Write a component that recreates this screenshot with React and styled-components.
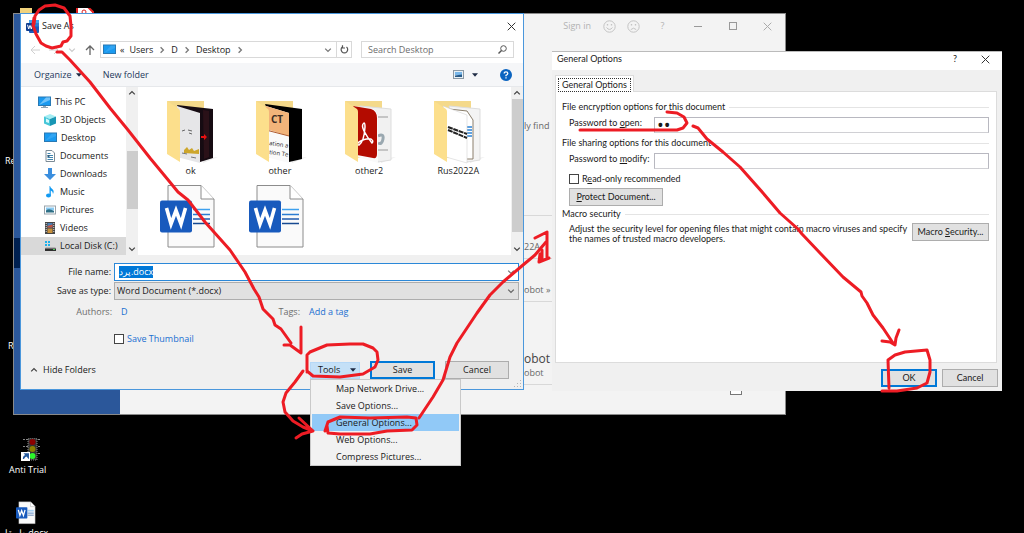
import { useEffect, useRef } from "react";
import styled, { createGlobalStyle } from "styled-components";

const GlobalStyle = createGlobalStyle`
*{
  box-sizing:border-box;
}
body{
  margin:0;
  background:#000;
  font-family:"Open Sans","Noto Sans",sans-serif;
  font-size:9px;
  line-height:12px;
  color:#1a1a1a;
}
button,input,select{
  font:inherit;
  color:inherit;
  margin:0;
}
svg{
  display:block;
  flex:none;
}
`;

const Desktop = styled.div`
position:relative;
min-height:100vh;
overflow:hidden;
`;

const Shortcut = styled.a`
position:absolute;
left:${props=>props.$x}px;
top:${props=>props.$y}px;
display:flex;
flex-direction:column;
align-items:center;
gap:2px;
color:#fff;
white-space:nowrap;
text-decoration:none;
`;

const WordWindow = styled.div`
position:absolute;
left:13px;
right:238px;
top:13px;
display:flex;
border:1px solid #8a8a8a;
background:#f3f3f3;
color:#666;
`;

const Rail = styled.div`
width:106px;
padding-top:224px;
background:#2b579a;
`;

const RailItem = styled.div`
height:30px;
background:#002050;
`;

const Backstage = styled.div`
flex:1;
`;

const WordHeader = styled.header`
display:flex;
justify-content:flex-end;
align-items:center;
height:24px;
color:#b2b2b2;
`;

const WordAction = styled.button`
display:flex;
justify-content:center;
align-items:center;
width:${props=>props.$width}px;
height:24px;
padding:0;
border:none;
background:none;
`;

const SignIn = styled.a`
margin-right:6px;
color:inherit;
text-decoration:none;
`;

const RecentList = styled.div`
margin-left:calc(50vw - 108px);
`;

const RecentRow = styled.div`
display:flex;
flex-direction:column;
justify-content:${props=>props.$middle ? "center" : "flex-end"};
height:${props=>props.$height}px;
padding-bottom:${props=>props.$middle ? "2px" : "5px"};
border-bottom:1px solid #d8d8d8;
white-space:pre;
`;

const RecentTitle = styled.span`
font-size:12px;
line-height:16px;
color:#444;
`;

const WordFooter = styled.div`
display:flex;
justify-content:flex-end;
height:29px;
padding-right:43px;
`;

const FooterBox = styled.div`
width:12px;
height:10px;
border:1px solid #777;
background:#fff;
`;

const SaveDialog = styled.section`
position:absolute;
left:20px;
top:13px;
width:calc(50vw - 8px);
border:1px solid #4a97dc;
background:#fff;
`;

const TitleBar = styled.header`
display:flex;
align-items:center;
height:24px;
padding:0 7px 0 5px;
gap:3px;
`;

const Title = styled.h1`
flex:1;
margin:0;
font-size:9px;
font-weight:400;
`;

const IconButton = styled.button`
display:flex;
align-items:center;
justify-content:center;
padding:0;
border:none;
background:none;
`;

const NavRow = styled.div`
display:flex;
align-items:center;
height:25px;
padding:0 9px;
padding-bottom:2px;
`;

const Arrows = styled.div`
display:flex;
align-items:center;
gap:9px;
width:70px;
`;

const AddressBar = styled.div`
display:flex;
align-items:center;
flex:1;
height:17px;
margin-right:9px;
border:1px solid #d9d9d9;
padding-left:2px;
`;

const Crumbs = styled.nav`
display:flex;
align-items:center;
gap:5px;
flex:1;
padding-left:4px;
`;

const Crumb = styled.a`
color:#1a1a1a;
text-decoration:none;
`;

const Refresh = styled(IconButton)`
width:15px;
height:15px;
margin-left:4px;
border-left:1px solid #d9d9d9;
`;

const SearchBox = styled.label`
display:flex;
align-items:center;
width:153px;
height:17px;
padding:0 6px;
border:1px solid #d9d9d9;
`;

const SearchInput = styled.input`
flex:1;
min-width:0;
padding:0;
border:none;
outline:none;
background:none;
&::placeholder{
  color:#6d6d6d;
  opacity:1;
}
`;

const Toolbar = styled.div`
display:flex;
align-items:center;
height:24px;
padding:0 11px 0 13px;
border-bottom:1px solid #e6e8eb;
background:#f5f6f8;
color:#1e395b;
`;

const ToolbarButton = styled.button`
display:flex;
align-items:center;
gap:4px;
padding:0;
margin-right:${props=>props.$gap}px;
border:none;
background:none;
`;

const Spacer = styled.div`
flex:1;
`;

const Browser = styled.div`
display:flex;
height:168px;
`;

const Sidebar = styled.ul`
width:105px;
margin:0;
padding:6px 0 0;
list-style:none;
`;

const Place = styled.li`
display:flex;
align-items:center;
gap:4px;
height:18px;
padding-left:${props=>props.$root ? "17px" : "23px"};
background:${props=>props.$active ? "#d9d9d9" : "none"};
white-space:nowrap;
`;

const ScrollTrack = styled.div`
display:flex;
flex-direction:column;
align-items:center;
width:12px;
background:#f0f0f0;
`;

const ScrollArrow = styled(IconButton)`
width:12px;
height:12px;
`;

const ScrollThumb = styled.div`
width:11px;
height:${props=>props.$height}px;
margin-top:${props=>props.$top}px;
margin-bottom:auto;
background:#cdcdcd;
`;

const Files = styled.div`
flex:1;
display:grid;
grid-template-columns:repeat(4, 1fr);
align-content:start;
row-gap:7px;
padding:13px 8px 0;
`;

const FileItem = styled.div`
display:flex;
flex-direction:column;
align-items:center;
gap:1px;
`;

const Form = styled.form`
position:relative;
padding:8px 4px 10px 0;
background:#f0f0f0;
`;

const Grip = styled.svg`
position:absolute;
right:1px;
bottom:1px;
`;

const Field = styled.div`
display:flex;
align-items:center;
gap:3px;
margin-bottom:1px;
`;

const FieldLabel = styled.label`
width:90px;
text-align:right;
`;

const ControlBox = styled.div`
display:flex;
align-items:center;
flex:1;
height:18px;
padding-right:3px;
border:1px solid ${props=>props.$focus ? "#2b88d8" : "#adadad"};
background:${props=>props.$focus ? "#fff" : "#e1e1e1"};
`;

const NameInput = styled.input`
flex:1;
min-width:0;
padding:0 4px;
border:none;
outline:none;
background:none;
&::selection{
  background:#0078d7;
  color:#fff;
}
`;

const TypeSelect = styled.select`
flex:1;
appearance:none;
padding:0 2px;
border:none;
outline:none;
background:none;
`;

const MetaRow = styled.div`
display:flex;
align-items:center;
height:16px;
margin-top:4px;
`;

const MetaName = styled.span`
width:${props=>props.$width}px;
padding-right:9px;
text-align:right;
color:#6d6d6d;
`;

const MetaLink = styled.a`
width:${props=>props.$width}px;
color:#1a6fd0;
text-decoration:none;
`;

const Check = styled.label`
display:flex;
align-items:center;
gap:3px;
color:${props=>props.$link ? "#1a6fd0" : "#1a1a1a"};
`;

const CheckInput = styled.input`
appearance:none;
width:10px;
height:10px;
border:1px solid #444;
background:#fff;
`;

const ThumbnailRow = styled.div`
display:flex;
padding:13px 0 0 93px;
`;

const Footer = styled.footer`
display:flex;
align-items:center;
gap:10px;
margin-top:16px;
padding:0 10px 0 9px;
`;

const HideFolders = styled(IconButton)`
gap:5px;
margin-right:auto;
`;

const ToolsWrap = styled.div`
position:relative;
`;

const ToolsButton = styled.button`
display:flex;
align-items:center;
justify-content:space-between;
width:50px;
height:17px;
padding:0 3px 0 7px;
border:1px solid #b5d8f7;
background:#c4e0f7;
`;

const Button = styled.button`
width:${props=>props.$width}px;
height:18px;
padding:0;
border:${props=>props.$primary ? "2px solid #0078d7" : "1px solid #adadad"};
background:#e1e1e1;
white-space:nowrap;
`;

const Menu = styled.ul`
position:absolute;
z-index:1;
left:0;
top:17px;
width:151px;
margin:0;
padding:0 1px;
border:1px solid #c9c9c9;
background:#f2f2f2;
list-style:none;
`;

const MenuItem = styled.li`
height:17px;
padding-left:24px;
line-height:17px;
background:${props=>props.$active ? "#91c9f7" : "none"};
`;

const OptionsDialog = styled.section`
position:absolute;
left:calc(50vw + 40px);
right:22px;
top:51px;
padding-bottom:4px;
border-top:1px solid #bbb;
background:#f0f0f0;
font-family:Lato,"Open Sans",sans-serif;
`;

const OptionsTitle = styled.header`
display:flex;
align-items:center;
gap:24px;
height:18px;
padding:0 12px 4px 5px;
background:#fff;
`;

const Tab = styled.button`
display:block;
position:relative;
z-index:1;
height:17px;
margin:5px 0 -1px 3px;
padding:2px;
border:1px solid #dcdcdc;
border-bottom:none;
background:#fff;
`;

const TabText = styled.span`
display:block;
padding:0 3px;
border:1px dotted #333;
`;

const Panel = styled.div`
min-height:272px;
margin:0 5px 0 3px;
padding:9px 7px 0 6px;
border:1px solid #dcdcdc;
background:#fff;
`;

const Group = styled.h2`
display:flex;
align-items:center;
gap:4px;
margin:0;
font-size:9px;
font-weight:400;
white-space:nowrap;
&::after{
  content:"";
  flex:1;
  border-top:1px solid #e4e4e4;
}
`;

const PasswordRow = styled.div`
display:flex;
align-items:flex-start;
margin:4px 0 4px 7px;
`;

const PasswordLabel = styled.label`
width:85px;
white-space:nowrap;
`;

const PasswordInput = styled.input`
flex:1;
min-width:0;
height:16px;
padding:0 2px;
border:1px solid #b8b8c0;
border-bottom-color:#d0d0d4;
outline:none;
font-family:"Open Sans",sans-serif;
font-size:18px;
line-height:14px;
`;

const OptionRows = styled.div`
display:flex;
flex-direction:column;
align-items:flex-start;
gap:3px;
margin:0 0 2px 7px;
`;

const MacroRow = styled.div`
display:flex;
align-items:flex-start;
gap:2px;
margin:3px 0 0 7px;
`;

const MacroText = styled.p`
flex:1;
margin:0;
line-height:10px;
padding-top:1px;
`;

const OptionsFooter = styled.footer`
display:flex;
justify-content:flex-end;
gap:5px;
padding:6px 4px 0 0;
`;

const Annotations = styled.svg`
position:absolute;
z-index:2;
left:0;
top:0;
pointer-events:none;
`;

const Close = ({ size = 9, color = "#333" }) => (
  <svg width={size} height={size} viewBox="0 0 9 9" stroke={color} fill="none">
    <path d="M.7.7 8.3 8.3M8.3.7.7 8.3" />
  </svg>
);

const Chevron = ({ dir = "down", color = "#444" }) => {
  const turn = { down: 0, up: 180, right: -90, left: 90 }[dir];
  return (
    <svg width="8" height="8" viewBox="0 0 8 8" stroke={color} strokeWidth="1.3" fill="none">
      <path d="M1.2 2.6 4 5.4 6.8 2.6" transform={`rotate(${turn} 4 4)`} />
    </svg>
  );
};

const Caret = () => (
  <svg width="6" height="4" viewBox="0 0 6 4" fill="#1e2b45"><path d="M0 .3H6L3 3.8Z" /></svg>
);

const Face = ({ sad }) => (
  <svg width="13" height="13" viewBox="0 0 13 13" stroke="#c4c4c4" fill="none">
    <circle cx="6.5" cy="6.5" r="5.7" />
    <path d={sad ? "M3.8 9.6Q6.5 6.8 9.2 9.6" : "M3.5 7.5Q6.5 11.4 9.5 7.5"} />
    <path d="M4.5 4v1.4M8.5 4v1.4" strokeWidth="1.3" />
  </svg>
);

const WordLogo = () => (
  <svg width="13" height="13" viewBox="0 0 13 13">
    <rect x="3" y="0" width="10" height="13" rx="1" fill="#1b5cbe" />
    <path d="M3 1a1 1 0 0 1 1-1h8a1 1 0 0 1 1 1v2.5H3Z" fill="#41a5ee" />
    <path d="M3 3.5h10v3H3Z" fill="#2b7cd3" />
    <rect y="3" width="8" height="8" rx="1" fill="#103f91" />
    <path d="M1.5 4.8 2.7 9 4 5.4 5.3 9 6.5 4.8" stroke="#fff" fill="none" />
  </svg>
);

const Monitor = ({ base }) => (
  <svg width="13" height="12" viewBox="0 0 13 12">
    <rect x=".5" y="1" width="12" height="8.5" fill="#1a9af0" stroke="#2879b4" />
    <path d="M1 9 8 1.5H12V4Z" fill="#7cc8fa" opacity={base ? ".9" : ".25"} />
    {base && <path d="M5 10h3v1h2v1H3v-1h2Z" fill="#8fa5b5" />}
  </svg>
);

const placeIcons = {
  "This PC": <Monitor base />,
  "3D Objects": (
    <svg width="12" height="12" viewBox="0 0 12 12">
      <path d="M6 0 12 2.5 6 5 0 2.5Z" fill="#a4edf3" />
      <path d="M0 2.5 6 5V12L0 9.5Z" fill="#46c6d8" />
      <path d="M12 2.5 6 5V12L12 9.5Z" fill="#1996b4" />
      <path d="M2 4.5 5 6V9L2 8Z" fill="#d4fafd" />
    </svg>
  ),
  "Desktop": <Monitor />,
  "Documents": (
    <svg width="12" height="12" viewBox="0 0 12 12">
      <path d="M2 .5H8L10.5 3V11.5H2Z" fill="#fff" stroke="#7c8b96" />
      <path d="M3.5 3.5h3M3.5 5.5h5.5M3.5 7.5h5.5M3.5 9.5h5.5" stroke="#4186b0" />
      <path d="M3.5 5h2v2h-2Z" fill="#315d7c" />
    </svg>
  ),
  "Downloads": (
    <svg width="12" height="12" viewBox="0 0 12 12"><path d="M4 0H8V6H12L6 12 0 6H4Z" fill="#3b8ede" /></svg>
  ),
  "Music": (
    <svg width="12" height="12" viewBox="0 0 12 12">
      <path d="M6 0Q6.5 2 8.5 3.3 10.5 5 9 8 9 5 6.8 4.5V9.5H5.5V0Z" fill="#129af2" />
      <ellipse cx="4.5" cy="9.6" rx="2.5" ry="2" fill="#129af2" />
    </svg>
  ),
  "Pictures": (
    <svg width="12" height="12" viewBox="0 0 12 12">
      <rect x=".5" y="2" width="11" height="8" fill="#fff" stroke="#98a4ac" />
      <path d="M2 3.5h8v3H2Z" fill="#8acaf2" />
      <path d="M2 6.5Q5 4 10 7V8.5H2Z" fill="#2d6f86" />
    </svg>
  ),
  "Videos": (
    <svg width="12" height="12" viewBox="0 0 12 12">
      <rect x="1" width="10" height="12" fill="#464646" />
      <path d="M3.5 1h5v4.5h-5Z" fill="#487fb5" />
      <path d="M3.5 6.5h5V11h-5Z" fill="#c8913c" />
      <path d="M3.5 4 8.5 2.5V5.5h-5Z" fill="#c45340" />
      <path d="M2.2 1v10M9.8 1v10" stroke="#ddd" strokeDasharray="1 1" />
    </svg>
  ),
  "Local Disk (C:)": (
    <svg width="12" height="12" viewBox="0 0 12 12">
      <path d="M1 1h2v2H1ZM4 1h2v2H4ZM1 4h2v2H1ZM4 4h2v2H4Z" fill="#1cb0ea" />
      <path d="M2 7h9l1 1v1H1V8Z" fill="#b4b4b4" />
      <path d="M1 8.5h11V11H1Z" fill="#2e2e2e" />
      <path d="M9 9.5h2" stroke="#4fd05a" />
    </svg>
  ),
};

const folderArt = {
  "ok": (
    <>
      <path d="M12 5 48 9V58L35 62Z" fill="#160b12" />
      <path d="M38 10 44 11V57L39 59Z" fill="#2a1118" />
      <path d="M12 6 35 13V63L12 57Z" fill="#e6e6e8" />
      <path d="M36 36h3v-2l3 3-3 3v-2h-3Z" fill="#e81010" />
      <path d="M17 31l3-1M23 30l4 1M24 33l3 1" stroke="#666" />
      <path d="M19 50l3-3 2 3 3-2 2 3 5-2v5l-15-1Z" fill="#cda62c" />
      <path d="M17 53l5 1M26 57l5 1" stroke="#777" />
    </>
  ),
  "other": (
    <>
      <path d="M11 4 48 9V59L35 62Z" fill="#000" />
      <path d="M12 6 35 13V63L12 57Z" fill="#fafafa" />
      <path d="M12 6 35 13V36L12 29Z" fill="#f2b47a" />
      <path d="M12 30 35 36" stroke="#b05b2e" />
      <text x="17" y="23" fontSize="10" fontWeight="700" fill="#3b2c24">CT</text>
      <text x="15" y="45" fontSize="6" fill="#222" transform="rotate(8 15 45)">ation a</text>
      <text x="15" y="54" fontSize="6" fill="#222" transform="rotate(8 15 54)">tion Te</text>
    </>
  ),
  "other2": (
    <>
      <path d="M17 6 48 9V60L35 62Z" fill="#f1f1f1" stroke="#ddd" />
      <path d="M35 17h10M35 50h10" stroke="#999" />
      <path d="M35 36q6-3 5 3t-5 4" stroke="#9aa8b0" strokeWidth="3" fill="none" />
      <path d="M12 6 29 9Q35 11 35 18V63L14 57Z" fill="#fafafa" />
      <path d="M10 6 28 9Q34 11 34 18V54Q34 59 30 58L14 55V14Z" fill="#b30b00" />
      <path d="M21 23q-3 2 0 8t8 12q2-2-1-4-5-1-12 3-3 3 0 3 5-3 6-18 0-4-1-4Z" fill="none" stroke="#fff" strokeWidth="1.5" />
    </>
  ),
  "Rus2022A": (
    <>
      <path d="M17 6 48 9V60L35 62Z" fill="#f4f4f4" stroke="#ddd" />
      <path d="M17 9 35 11 41 20V59H35" fill="#fff" stroke="#8b7f6c" />
      <path d="M35 27h5M35 30h5M35 33h5M35 36h5" stroke="#2d83d5" strokeWidth="1.5" />
      <path d="M11 6 35 15V63L14 57Z" fill="#fff" stroke="#d4d4d4" strokeWidth=".6" />
      <path d="M16 27 35 34M16 30 35 38" stroke="#222" strokeWidth="2" strokeDasharray="5 .7" />
    </>
  ),
};

const Folder = ({ name }) => (
  <svg width="62" height="64" viewBox="-5 0 62 64">
    <path d="M38 59 53 57 38 63Z" fill="#ececec" />
    <path d="M2 1H39V58H12Z" fill="#f4d98b" />
    {folderArt[name]}
    <path d="M2 1 14 9Q15 10 15 12V62L2 54Z" fill="#fcdf8c" />
  </svg>
);

const WordDoc = ({ width = 62, height = 66 }) => (
  <svg width={width} height={height} viewBox="0 0 62 66">
    <path d="M8 1.5H41L54 15V63H8Z" fill="#fafafa" stroke="#8c8c8c" />
    <path d="M41 1.5V15H54" fill="#fff" stroke="#8c8c8c" />
    <path d="M33 25.5H50" stroke="#3da0ee" strokeWidth="1.5" />
    <path d="M33 30.5H50" stroke="#2b7cd3" strokeWidth="1.5" />
    <path d="M33 35H50" stroke="#1f5aae" strokeWidth="1.5" />
    <path d="M33 39.5H50" stroke="#174a91" strokeWidth="1.5" />
    <rect y="16.5" width="32" height="32" rx="2" fill="#185abd" />
    <path d="M6.5 24 11 40 16 26.5 21 40 25.5 24" stroke="#fff" strokeWidth="3.6" fill="none" />
  </svg>
);

const strokes = [
  "M34 24 35 16 39 10 45 6 55 5 64 8 70 16 71 26 71 36 67 41 63 42 61 46 52 48 46 46 41 43 36 34 33 25 34 18",
  "M57 52H62L70 60 90 82 110 108 128 130 150 158 169 181 178 192 188 200 205 222 230 250 245 272 254 289 259 297 263 309 273 319 275 325 281 329 291 343",
  "M284 345H290L301 353M301 327V353",
  "M307 372V355L310 352 327 345 350 344 363 344 373 348 377 352 378 360 375 367 363 374 340 377 313 376 307 371",
  "M303 371 295 382 286 393 283 402 285 412 293 421 303 427 313 431M299 418 313 431 302 434 296 438",
  "M325 431 328 422 340 417 370 418 407 417 416 418 417 425 412 430 387 431 370 434 340 434 328 433 327 426",
  "M419 418 423 412 433 397 443 380 450 357 457 343 477 313 490 295 503 282 523 265 535 255 546 242",
  "M535 238 547 232V258M542 250V259L539 262 549 258M540 254 539 262",
  "M580 130H677L683 128 687 123 684 117 677 113 667 112",
  "M693 126 698 128 707 139 723 152 740 167 763 193 780 213 798 229 802 234 820 253 843 277 861 292 862 296 867 303 873 315 883 328 893 343",
  "M882 341 890 342 895 345 896 338 899 330",
  "M889 388 888 360 895 355 905 352 927 350 930 360V372L927 383 917 388 897 391H882",
];

const App = () => {
  const nameRef = useRef(null);

  useEffect(() => {
    nameRef.current.focus();
    nameRef.current.select();
  }, []);

  return (
    <Desktop>
      <GlobalStyle />
      <Shortcut href="#" $x={20} $y={8}>
        <svg width="74" height="14" viewBox="0 0 74 14">
          <path d="M0 0H12V14H0Z" fill="#f1d27c" />
          <path d="M57 -1H68L73 4V14H57Z" fill="#fff" stroke="#e02020" strokeWidth="2" />
          <circle cx="64" cy="4" r="2" fill="none" stroke="#e02020" />
        </svg>
      </Shortcut>
      <Shortcut href="#" $x={5} $y={155}>Re</Shortcut>
      <Shortcut href="#" $x={8} $y={340}>R</Shortcut>
      <Shortcut href="#" $x={9} $y={438}>
        <svg width="26" height="24" viewBox="0 0 26 24">
          <path d="M8 1.5H26M8 8.5H26M8 15.5H26" stroke="#888" strokeDasharray="2 1" />
          <rect x="13" width="9" height="22" fill="#333" stroke="#888" strokeDasharray="1 1" />
          <circle cx="17.5" cy="4" r="3" fill="#8b0000" />
          <circle cx="17.5" cy="11" r="3" fill="#8b8000" />
          <circle cx="17.5" cy="18" r="3" fill="#2cf52c" />
          <rect x="6" y="14" width="9" height="9" fill="#fff" />
          <path d="M8.5 21Q8.5 17.5 12 17.5M10 16H13.3V19.5Z" stroke="#24599e" strokeWidth="1.3" fill="#24599e" />
        </svg>
        Anti Trial
      </Shortcut>
      <Shortcut href="#" $x={5} $y={501}>
        <WordDoc width={22} height={24} />
        طبيقا.docx
      </Shortcut>

      <WordWindow>
        <Rail><RailItem /></Rail>
        <Backstage>
          <WordHeader>
            <SignIn href="#">Sign in</SignIn>
            <WordAction $width={24} aria-label="Smile"><Face /></WordAction>
            <WordAction $width={24} aria-label="Frown"><Face sad /></WordAction>
            <WordAction $width={35}>?</WordAction>
            <WordAction $width={35} aria-label="Minimize">
              <svg width="8" height="8" viewBox="0 0 8 8"><path d="M0 4.5H8" stroke="#999" /></svg>
            </WordAction>
            <WordAction $width={35} aria-label="Maximize">
              <svg width="8" height="8" viewBox="0 0 8 8"><rect x=".5" y=".5" width="7" height="7" fill="none" stroke="#999" /></svg>
            </WordAction>
            <WordAction $width={35} aria-label="Close"><Close color="#aaa" /></WordAction>
          </WordHeader>
          <RecentList>
            <RecentRow $height={178} $middle>ly find</RecentRow>
            <RecentRow $height={43}>22A</RecentRow>
            <RecentRow $height={43}>obot » </RecentRow>
            <RecentRow $height={83}>
              <RecentTitle>obot</RecentTitle>
              obot
            </RecentRow>
          </RecentList>
          <WordFooter><FooterBox /></WordFooter>
        </Backstage>
      </WordWindow>

      <SaveDialog>
        <TitleBar>
          <WordLogo />
          <Title>Save As</Title>
          <IconButton aria-label="Close"><Close /></IconButton>
        </TitleBar>
        <NavRow>
          <Arrows>
            <svg width="10" height="10" viewBox="0 0 10 10" stroke="#d0d0d0" fill="none"><path d="M10 5H1M5 1 1 5 5 9" /></svg>
            <svg width="10" height="10" viewBox="0 0 10 10" stroke="#d0d0d0" fill="none"><path d="M0 5H9M5 1 9 5 5 9" /></svg>
            <Chevron color="#ccc" />
            <svg width="10" height="10" viewBox="0 0 10 10" stroke="#666" strokeWidth="1.3" fill="none"><path d="M5 10V1M1 5 5 1 9 5" /></svg>
          </Arrows>
          <AddressBar>
            <Monitor />
            <Crumbs>
              <span>«</span>
              <Crumb href="#">Users</Crumb>
              <Chevron dir="right" color="#777" />
              <Crumb href="#">D</Crumb>
              <Chevron dir="right" color="#777" />
              <Crumb href="#">Desktop</Crumb>
              <Chevron dir="right" color="#777" />
            </Crumbs>
            <Chevron color="#777" />
            <Refresh aria-label="Refresh">
              <svg width="9" height="9" viewBox="0 0 9 9" stroke="#555" fill="none" strokeWidth="1.2"><path d="M6.5 2A3.3 3.3 0 1 1 2.3 2M2.5 .3V3H5" /></svg>
            </Refresh>
          </AddressBar>
          <SearchBox>
            <SearchInput aria-label="Search Desktop" placeholder="Search Desktop" />
            <svg width="9" height="9" viewBox="0 0 9 9" stroke="#555" fill="none"><circle cx="5.5" cy="3.5" r="2.8" /><path d="M3.5 5.5.5 8.5" strokeWidth="1.4" /></svg>
          </SearchBox>
        </NavRow>
        <Toolbar>
          <ToolbarButton $gap={21}>Organize <Caret /></ToolbarButton>
          <ToolbarButton $gap={0}>New folder</ToolbarButton>
          <Spacer />
          <ToolbarButton $gap={22} aria-label="Change your view">
            <svg width="15" height="10" viewBox="0 0 15 10">
              <rect x=".5" y=".5" width="10" height="8" fill="#e8f0f5" stroke="#8b99a5" />
              <path d="M2 2h7v3H2Z" fill="#78b7ea" />
              <path d="M2 5.5 9 4.5V7H2Z" fill="#285a88" />
            </svg>
            <Caret />
          </ToolbarButton>
          <IconButton aria-label="Help">
            <svg width="12" height="12" viewBox="0 0 12 12">
              <circle cx="6" cy="6" r="6" fill="#0b64c0" />
              <path d="M4.2 4.5Q4.2 2.9 6 2.9T7.8 4.4Q7.8 5.4 6 6.3V7.3M6 8.2V9.5" stroke="#fff" strokeWidth="1.3" fill="none" />
            </svg>
          </IconButton>
        </Toolbar>
        <Browser>
          <Sidebar>
            {Object.keys(placeIcons).map((name, i) => (
              <Place key={name} $root={i === 0} $active={name.startsWith("Local")}>
                {placeIcons[name]}
                {name}
              </Place>
            ))}
          </Sidebar>
          <ScrollTrack>
            <ScrollArrow aria-label="Scroll up"><Chevron dir="up" /></ScrollArrow>
            <ScrollThumb $height={58} $top={52} />
            <ScrollArrow aria-label="Scroll down"><Chevron /></ScrollArrow>
          </ScrollTrack>
          <Files>
            {Object.keys(folderArt).map((name) => (
              <FileItem key={name}>
                <Folder name={name} />
                {name}
              </FileItem>
            ))}
            <FileItem><WordDoc /></FileItem>
            <FileItem><WordDoc /></FileItem>
          </Files>
          <ScrollTrack>
            <ScrollArrow aria-label="Scroll up"><Chevron dir="up" /></ScrollArrow>
            <ScrollThumb $height={133} $top={0} />
            <ScrollArrow aria-label="Scroll down"><Chevron /></ScrollArrow>
          </ScrollTrack>
        </Browser>
        <Form onSubmit={(e) => e.preventDefault()}>
          <Field>
            <FieldLabel htmlFor="name">File name:</FieldLabel>
            <ControlBox $focus>
              <NameInput id="name" ref={nameRef} defaultValue="پرد.docx" />
              <Chevron color="#777" />
            </ControlBox>
          </Field>
          <Field>
            <FieldLabel htmlFor="type">Save as type:</FieldLabel>
            <ControlBox>
              <TypeSelect id="type"><option>Word Document (*.docx)</option></TypeSelect>
              <Chevron color="#666" />
            </ControlBox>
          </Field>
          <MetaRow>
            <MetaName $width={100}>Authors:</MetaName>
            <MetaLink href="#" $width={120}>D</MetaLink>
            <MetaName $width={68}>Tags:</MetaName>
            <MetaLink href="#">Add a tag</MetaLink>
          </MetaRow>
          <ThumbnailRow>
            <Check $link><CheckInput type="checkbox" />Save Thumbnail</Check>
          </ThumbnailRow>
          <Footer>
            <HideFolders type="button"><Chevron dir="up" />Hide Folders</HideFolders>
            <ToolsWrap>
              <ToolsButton type="button">Tools <Caret /></ToolsButton>
              <Menu>
                <MenuItem>Map Network Drive...</MenuItem>
                <MenuItem>Save Options...</MenuItem>
                <MenuItem $active>General Options...</MenuItem>
                <MenuItem>Web Options...</MenuItem>
                <MenuItem>Compress Pictures...</MenuItem>
              </Menu>
            </ToolsWrap>
            <Button $width={65} $primary>Save</Button>
            <Button $width={64} type="button">Cancel</Button>
          </Footer>
          <Grip width="8" height="8" viewBox="0 0 8 8" fill="#b5b5b5">
            <path d="M6 0h1v1H6ZM3 3h1v1H3ZM6 3h1v1H6ZM0 6h1v1H0ZM3 6h1v1H3ZM6 6h1v1H6Z" />
          </Grip>
        </Form>
      </SaveDialog>

      <OptionsDialog>
        <OptionsTitle>
          <Title>General Options</Title>
          <IconButton>?</IconButton>
          <IconButton aria-label="Close"><Close /></IconButton>
        </OptionsTitle>
        <Tab><TabText>General Options</TabText></Tab>
        <Panel>
          <Group>File encryption options for this document</Group>
          <PasswordRow>
            <PasswordLabel htmlFor="open">Password to <u>o</u>pen:</PasswordLabel>
            <PasswordInput id="open" type="password" defaultValue="12" />
          </PasswordRow>
          <Group>File sharing options for this document</Group>
          <PasswordRow>
            <PasswordLabel htmlFor="modify">Password to <u>m</u>odify:</PasswordLabel>
            <PasswordInput id="modify" type="password" />
          </PasswordRow>
          <OptionRows>
            <Check><CheckInput type="checkbox" /><span>R<u>e</u>ad-only recommended</span></Check>
            <Button $width={94}><u>P</u>rotect Document...</Button>
          </OptionRows>
          <Group>Macro security</Group>
          <MacroRow>
            <MacroText>Adjust the security level for opening files that might contain macro viruses and specify the names of trusted macro developers.</MacroText>
            <Button $width={77}>Macro <u>S</u>ecurity...</Button>
          </MacroRow>
        </Panel>
        <OptionsFooter>
          <Button $width={56} $primary>OK</Button>
          <Button $width={56}>Cancel</Button>
        </OptionsFooter>
      </OptionsDialog>

      <Annotations width="1024" height="533" viewBox="0 0 1024 533" fill="none" stroke="#ed1c24" strokeWidth="3" strokeLinejoin="round" strokeLinecap="round">
        {strokes.map((d) => <path key={d} d={d} />)}
      </Annotations>
    </Desktop>
  );
};

export default App;
